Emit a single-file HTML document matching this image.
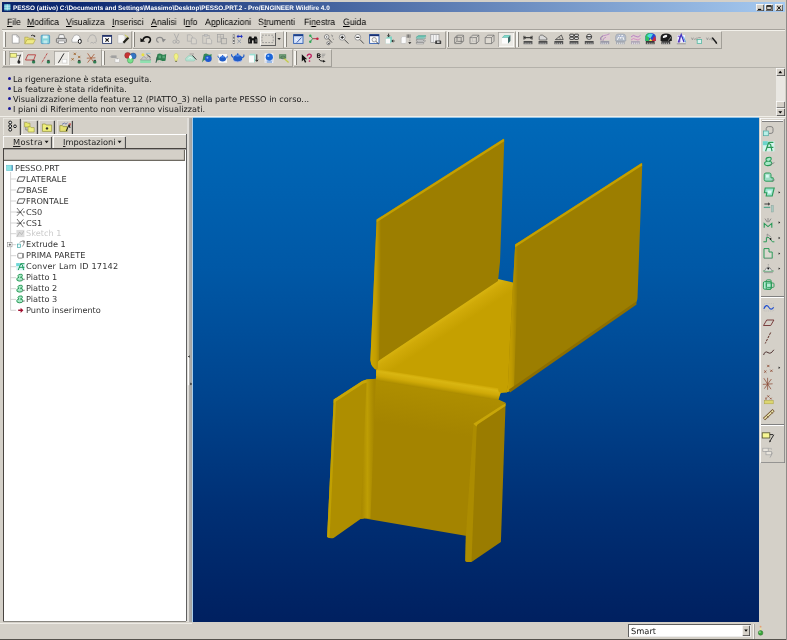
<!DOCTYPE html>
<html lang="it">
<head>
<meta charset="utf-8">
<title>PESSO (attivo) - Pro/ENGINEER Wildfire 4.0</title>
<style>
html,body{margin:0;padding:0;}
body{text-rendering:geometricPrecision;width:787px;height:640px;overflow:hidden;background:#d4d0c8;font-family:"DejaVu Sans","Liberation Sans",sans-serif;position:relative;color:#000;}
.abs{position:absolute;}
#title{left:2px;top:2px;width:783px;height:10px;background:linear-gradient(90deg,#0a246a 0%,#0e2a72 10%,#a6caf0 100%);}
#title .t{will-change:transform;position:absolute;left:10.5px;top:1.5px;height:10px;line-height:10px;font-family:"Liberation Sans",sans-serif;font-size:6.4px;font-weight:bold;color:#fff;white-space:nowrap;}
.wb{position:absolute;top:1.5px;height:7.5px;width:8px;background:#d4d0c8;box-shadow:inset .7px .7px 0 #fff,inset -.7px -.7px 0 #404040;}
#menu{left:2px;top:12px;width:783px;height:17px;background:#d4d0c8;font-family:"Liberation Sans",sans-serif;}
#menu span{will-change:transform;position:absolute;top:2.5px;height:14px;line-height:14px;font-size:9.2px;white-space:nowrap;color:#000;transform:scaleX(.94);transform-origin:0 50%;}
#menu u{text-decoration:underline;text-decoration-thickness:.7px;text-underline-offset:.6px;}
.tbg{position:absolute;box-sizing:border-box;border:1px solid;border-color:#f2f0ea #a29f98 #a29f98 transparent;border-left:none;}
.tbg:before{content:"";position:absolute;left:0;top:.6px;bottom:.8px;width:1.700px;background:#f6f5f1;border-right:.9px solid #86837c;}
.pressed{position:absolute;background:#eceae5;box-shadow:inset .8px .8px 0 #a4a19a,inset -.8px -.8px 0 #fbfbf8;}
#msg{left:2px;top:68px;width:783px;height:49px;background:#d4d0c8;}
#msg div.l{will-change:transform;position:absolute;left:10.8px;height:10px;line-height:10px;font-size:8.15px;white-space:nowrap;color:#181818;}
#msg b{position:absolute;left:6px;width:3.2px;height:3.2px;border-radius:50%;background:#1a1a9c;}
#left{left:0;top:117px;width:193px;height:523px;background:#d4d0c8;}
.tn{will-change:transform;position:absolute;left:26.2px;font-size:8.2px;line-height:11px;height:11px;white-space:nowrap;color:#363636;}
#view{left:193px;top:118px;width:566px;height:504px;background:linear-gradient(180deg,#0069b9 0%,#0058a6 30%,#00448e 55%,#002f74 78%,#002060 100%);overflow:hidden;}
#right{left:759px;top:117px;width:28px;height:505px;background:#d4d0c8;}
#status{left:0;top:622px;width:787px;height:18px;background:#d4d0c8;}
.btn{will-change:transform;position:absolute;font-size:8.25px;white-space:nowrap;color:#202020;}
</style>
</head>
<body>
<div id="title" class="abs"><svg class="abs" style="left:1.6px;top:1.8px" width="7" height="7" viewBox="0 0 7 7"><rect x=".2" y=".2" width="6.200" height="6.200" fill="#6cc8d8"/><path d="M.2,2.200h6.200M.2,4.300h6.200M3.300,.2v6.200" stroke="#d8f4fa" stroke-width=".6"/></svg><div class="t">PESSO (attivo) C:\Documents and Settings\Massimo\Desktop\PESSO.PRT.2 - Pro/ENGINEER Wildfire 4.0</div><div class="wb" style="left:754.300px"><svg width="8" height="7.500" class="abs" style="left:0;top:0"><path d="M2,5.400h3.200" stroke="#000" stroke-width="1.100"/></svg></div><div class="wb" style="left:763.200px"><svg width="8" height="7.500" class="abs" style="left:0;top:0"><rect x="1.800" y="1.800" width="4.400" height="3.800" fill="none" stroke="#000" stroke-width=".7"/><path d="M1.800,2.100h4.400" stroke="#000" stroke-width="1.100"/></svg></div><div class="wb" style="left:773.300px"><svg width="8" height="7.500" class="abs" style="left:0;top:0"><path d="M2.200,2l3.600,3.600M5.800,2l-3.600,3.600" stroke="#000" stroke-width="1"/></svg></div></div>
<div id="menu" class="abs"><span style="left:5px"><u>F</u>ile</span><span style="left:25px"><u>M</u>odifica</span><span style="left:64px"><u>V</u>isualizza</span><span style="left:110px"><u>I</u>nserisci</span><span style="left:149px"><u>A</u>nalisi</span><span style="left:181px">I<u>n</u>fo</span><span style="left:203px">A<u>p</u>plicazioni</span><span style="left:256px">S<u>t</u>rumenti</span><span style="left:302px">Fi<u>n</u>estra</span><span style="left:341px"><u>G</u>uida</span></div>
<div class="abs" style="left:2px;top:29px;width:783px;height:1px;background:#a6a39c"></div><div class="abs" style="left:2px;top:30px;width:783px;height:1px;background:#f2f0ea"></div>
<div class="tbg" style="left:3.4px;top:30.500px;width:128.79999999999998px;height:18px"></div><div class="tbg" style="left:132.6px;top:30.500px;width:151.6px;height:18px"></div><div class="tbg" style="left:284.4px;top:30.500px;width:162.0px;height:18px"></div><div class="tbg" style="left:446.6px;top:30.500px;width:69.60000000000002px;height:18px"></div><div class="tbg" style="left:516.4px;top:30.500px;width:205.60000000000002px;height:18px"></div><div class="tbg" style="left:3.4px;top:49px;width:98.6px;height:18px"></div><div class="tbg" style="left:102.2px;top:49px;width:190.5px;height:18px"></div><div class="tbg" style="left:294px;top:49px;width:37.5px;height:18px"></div><div class="pressed" style="left:8.500px;top:50.600px;width:14.200px;height:14.600px"></div><div class="pressed" style="left:54.300px;top:50.600px;width:14.600px;height:14.600px"></div><div class="pressed" style="left:497.600px;top:32px;width:16px;height:14.600px"></div><div class="abs" style="left:260px;top:32px;width:15.600px;height:14.300px;box-shadow:inset .8px .8px 0 #fff,inset -1px -1px 0 #606060;background:#dad6ce"></div>
<div class="abs" style="left:2px;top:67.300px;width:783px;height:.8px;background:#b4b1aa"></div><div class="abs" style="left:2px;top:68.100px;width:783px;height:.8px;background:#ecebe6"></div><div id="msg" class="abs"><b style="top:8.8px"></b><div class="l" style="top:5.8px">La rigenerazione è stata eseguita.</div><b style="top:18.8px"></b><div class="l" style="top:15.8px">La feature è stata ridefinita.</div><b style="top:28.9px"></b><div class="l" style="letter-spacing:.04px;top:25.9px">Visualizzazione della feature 12 (PIATTO_3) nella parte PESSO in corso...</div><b style="top:38.9px"></b><div class="l" style="top:35.9px">I piani di Riferimento non verranno visualizzati.</div><div class="abs" style="left:774px;top:0.200px;width:8.500px;height:48px;background:#e9e7e2"></div><div class="abs" style="left:774px;top:.2px;width:8.500px;height:8.200px;background:#d4d0c8;box-shadow:inset .7px .7px 0 #fff,inset -.8px -.8px 0 #404040"><svg class="abs" style="left:0;top:0" width="8.500" height="8.200"><path d="M2.300,5.200l1.950,-2.400l1.950,2.400z" fill="#000"/></svg></div><div class="abs" style="left:774px;top:33px;width:8.500px;height:6.600px;background:#d4d0c8;box-shadow:inset .7px .7px 0 #fff,inset -.8px -.8px 0 #606060"></div><div class="abs" style="left:774px;top:39.600px;width:8.500px;height:8.600px;background:#d4d0c8;box-shadow:inset .7px .7px 0 #fff,inset -.8px -.8px 0 #404040"><svg class="abs" style="left:0;top:0" width="8.500" height="8.600"><path d="M2.300,3.200l1.950,2.400l1.950,-2.400z" fill="#000"/></svg></div></div>
<div class="abs" style="left:0;top:116px;width:787px;height:1px;background:#f0eee8"></div><div class="abs" style="left:0;top:117px;width:787px;height:1px;background:#c4c1ba"></div><div class="abs" style="left:192px;top:117.200px;width:567px;height:1px;background:#8fc3ea"></div>
<div id="left" class="abs"><div class="abs" style="left:3px;top:1.400px;width:18.200px;height:16.600px;background:#d4d0c8;box-shadow:inset .8px .8px 0 #eceae4,inset -1.200px 0 0 #484848"></div><div class="abs" style="left:22.2px;top:3.300px;width:15.400000000000002px;height:13.700px;background:#d4d0c8;box-shadow:inset .8px .8px 0 #eceae4,inset -1.200px 0 0 #484848"></div><div class="abs" style="left:38.8px;top:3.300px;width:16.6px;height:13.700px;background:#d4d0c8;box-shadow:inset .8px .8px 0 #eceae4,inset -1.200px 0 0 #484848"></div><div class="abs" style="left:56.5px;top:3.300px;width:16.599999999999994px;height:13.700px;background:#d4d0c8;box-shadow:inset .8px .8px 0 #eceae4,inset -1.200px 0 0 #484848"></div><div class="abs" style="left:21px;top:17.200px;width:165.600px;height:1px;background:#fff"></div><div class="abs" style="left:186px;top:17.200px;width:1px;height:487px;background:#606060"></div><div class="abs" style="left:3.200px;top:18.500px;width:49.200px;height:13px;box-shadow:inset .8px .8px 0 #fff,inset -1.100px 0 0 #505050"></div><div class="abs" style="left:53.400px;top:18.500px;width:72.200px;height:13px;box-shadow:inset .8px .8px 0 #fff,inset -1.100px 0 0 #505050"></div><div class="btn" style="left:12.800px;top:20.400px;line-height:10px;letter-spacing:.3px"><u style="text-decoration-thickness:.6px;text-underline-offset:.9px">M</u>ostra</div><div class="btn" style="left:62.900px;top:20.400px;line-height:10px"><u style="text-decoration-thickness:.6px;text-underline-offset:.9px">I</u>mpostazioni</div><div class="abs" style="left:3.200px;top:31.300px;width:182.600px;height:473.500px;background:#fff;box-shadow:inset 1px 1.500px 0 #484440"></div><div class="abs" style="left:4.200px;top:32.800px;width:180.400px;height:11.200px;background:#d4d0c8;box-shadow:inset -1.100px -1.200px 0 #6e6a62"></div><div class="tn" style="top:45.8px;left:15.400px;">PESSO.PRT</div><div class="tn" style="top:56.8px;">LATERALE</div><div class="tn" style="top:67.8px;">BASE</div><div class="tn" style="top:78.8px;">FRONTALE</div><div class="tn" style="top:89.8px;">CS0</div><div class="tn" style="top:100.8px;">CS1</div><div class="tn" style="top:110.8px;color:#cbcbcb;">Sketch 1</div><div class="tn" style="top:121.8px;">Extrude 1</div><div class="tn" style="top:132.8px;">PRIMA PARETE</div><div class="tn" style="top:143.8px;letter-spacing:.16px;">Conver Lam ID 17142</div><div class="tn" style="top:154.8px;">Piatto 1</div><div class="tn" style="top:165.8px;">Piatto 2</div><div class="tn" style="top:176.8px;">Piatto 3</div><div class="tn" style="top:187.8px;">Punto inserimento</div></div>
<div class="abs" style="left:187px;top:118px;width:2.200px;height:504px;background:#e0deda"></div><div class="abs" style="left:189.200px;top:118px;width:2.800px;height:504px;background:linear-gradient(90deg,#b4b2ae,#a2a2a0)"></div><div class="abs" style="left:192px;top:118px;width:1.200px;height:504px;background:#a9cdea"></div>
<div id="view" class="abs"><svg width="566" height="504" viewBox="193 118 566 504" style="position:absolute;left:0;top:0">
<defs>
<linearGradient id="gband" gradientUnits="userSpaceOnUse" x1="437.800" y1="378.800" x2="435.900" y2="390.600"><stop offset="0" stop-color="#cfa906"/><stop offset="0.180" stop-color="#d9b612"/><stop offset="0.550" stop-color="#d0aa08"/><stop offset="0.800" stop-color="#bc9a02"/><stop offset="1" stop-color="#a88800"/></linearGradient>
<linearGradient id="glw" gradientUnits="userSpaceOnUse" x1="371" y1="300" x2="381" y2="300"><stop offset="0" stop-color="#cca600"/><stop offset="0.500" stop-color="#c29c00"/><stop offset="1" stop-color="#9c7e00"/></linearGradient>
<linearGradient id="grw" gradientUnits="userSpaceOnUse" x1="507" y1="320" x2="518" y2="320"><stop offset="0" stop-color="#c8a200"/><stop offset="0.450" stop-color="#bc9800"/><stop offset="1" stop-color="#9c7e00"/></linearGradient>
<linearGradient id="glf" gradientUnits="userSpaceOnUse" x1="362" y1="450" x2="374" y2="450"><stop offset="0" stop-color="#aa8a00"/><stop offset="0.450" stop-color="#be9e04"/><stop offset="1" stop-color="#a68600"/></linearGradient>
<linearGradient id="gfloor" gradientUnits="userSpaceOnUse" x1="437" y1="321" x2="446" y2="334.600"><stop offset="0" stop-color="#d8b410"/><stop offset="0.300" stop-color="#d0aa08"/><stop offset="1" stop-color="#c5a000"/></linearGradient>
<linearGradient id="gpanel" gradientUnits="userSpaceOnUse" x1="430" y1="390" x2="424" y2="430"><stop offset="0" stop-color="#ae8e00"/><stop offset="1" stop-color="#a48400"/></linearGradient>
</defs>
<!-- floor -->
<path d="M376,360 L498,279 L515,283 L516,383 L510,390.600 L506.200,392.500 L500.600,393.100 L499,396 L376,376 Z" fill="url(#gfloor)"/>
<!-- left wall -->
<path d="M376.700,219.400 L503.300,139 Q504.300,138.500 504.300,139.700 L500,262 L498,281 L377.500,361.500 L377.200,369.900 Q371,368 370.400,360 Z" fill="#9c7e00"/>
<path d="M376.700,219.400 L382,216 L379,361 L377.500,361.500 L377.200,369.900 Q371,368 370.400,360 Z" fill="url(#glw)"/>
<polygon points="376.700,219.400 503.600,138.800 504.200,141.300 376.700,222.200" fill="#c4a000"/>
<!-- right wall -->
<path d="M515.200,244.500 L641.300,163.200 Q642.300,162.600 642.300,163.800 L637.500,298 Q637,303 634,305 L510,391 L506.200,392.500 L508,385 L510,340 Z" fill="#9c7e00"/>
<path d="M515.200,244.500 L519,242 L514,388 L510,391 L506.200,392.500 L508,385 L510,340 Z" fill="url(#grw)"/>
<polygon points="515.200,244.500 641.600,163 642.200,165.400 515.200,247.300" fill="#c4a000"/>
<polygon points="636.200,301.500 636.600,304.600 510,392.400 509,389.600" fill="#8c6e00"/>
<!-- front panel -->
<polygon points="374.500,379.300 498.400,399.500 505.600,402.700 478,426 467,536 365,518.500" fill="url(#gpanel)"/>
<!-- front bend band -->
<path d="M377.200,369.300 L498.300,388.300 Q497.500,392 500.600,393.100 L498.400,400.300 L375.500,380.600 Z" fill="url(#gband)"/>
<!-- left flange -->
<path d="M333.750,399.500 L362.200,381 L366.600,379.600 L372,379 L366.500,518 L360.500,519 L333.600,538 Q330,539 327.100,537 Z" fill="#ae8e00"/>
<polygon points="366.600,379.600 375.900,378.750 370.500,518.600 366,517.900 360.500,519" fill="url(#glf)"/>
<polygon points="333.750,399.500 336.200,398 329.600,538 327.100,537" fill="#c0a002"/>
<polygon points="333.750,399.500 362.200,381 366.600,379.600 367,382.500 363,383.800 333.650,402.900" fill="#c8a606"/>
<!-- right flange -->
<path d="M476.800,424.500 L505.600,402.900 L500.900,542.100 L471.900,561.800 L467,562 Q465.300,562 465.300,560.700 L465.900,534.500 Z" fill="#9a7c00"/>
<polygon points="473.400,423.700 476.800,424.500 471.500,561.900 467,562 465.300,560.700 465.900,534.500" fill="#ac8c00"/>
<polygon points="473.400,423.700 505.600,402.900 505.500,406 477.600,424.500 476.500,426.500" fill="#c8a608"/>
</svg>
</div>
<div id="right" class="abs"><div class="abs" style="left:.8px;top:1px;width:25px;height:344.500px;box-shadow:inset .8px .8px 0 #fff,inset -.8px -.8px 0 #808080"></div><div class="abs" style="left:3px;top:3.600px;width:21px;height:1px;background:#808080;box-shadow:0 -1px 0 #fff"></div><div class="abs" style="left:2px;top:178.600px;width:23px;height:1px;background:#808080;box-shadow:0 1px 0 #fff"></div><div class="abs" style="left:2px;top:306.600px;width:23px;height:1px;background:#808080;box-shadow:0 1px 0 #fff"></div></div>
<div id="status" class="abs"><div class="abs" style="left:627.800px;top:2.200px;width:123.200px;height:13px;background:#fff;box-shadow:inset 1px 1px 0 #606060,inset -.8px -.8px 0 #e8e8e8"></div><div class="btn" style="left:630.600px;top:3.600px;line-height:11px;font-size:8.300px">Smart</div><div class="abs" style="left:742.200px;top:3.400px;width:8px;height:11px;background:#d4d0c8;box-shadow:inset .7px .7px 0 #fff,inset -.8px -.8px 0 #404040"><svg class="abs" style="left:0;top:0" width="8" height="11.200"><path d="M2.200,4.600l1.800,2.200l1.800,-2.200z" fill="#000"/></svg></div><svg class="abs" style="left:757px;top:3px" width="8" height="13" viewBox="0 0 8 13"><circle cx="3.600" cy="1.700" r=".9" fill="#e8a070"/><circle cx="3.600" cy="4" r="1" fill="#e8e0a0"/><circle cx="3.600" cy="7.900" r="2.300" fill="#3aa63a" stroke="#2a6a2a" stroke-width=".5"/><circle cx="2.900" cy="7.100" r=".9" fill="#90e090"/></svg><div class="abs" style="left:753.200px;top:1.500px;width:.8px;height:15px;background:#f4f2ee"></div><div class="abs" style="left:754px;top:1.500px;width:.8px;height:15px;background:#a8a6a0"></div><div class="abs" style="left:0;top:16.600px;width:787px;height:1.400px;background:#55524c"></div><div class="abs" style="left:786.200px;top:-622px;width:.8px;height:640px;background:#8e8c88"></div><div class="abs" style="left:3px;top:-1.200px;width:183px;height:1px;background:#8a8882"></div><div class="abs" style="left:0;top:.8px;width:192px;height:1px;background:#eeece6"></div></div>
<svg class="abs" style="left:0;top:0;pointer-events:none;filter:blur(.35px)" width="787" height="640" viewBox="0 0 787 640"><path d="M44.600,140.800h4l-2,2.500z M117.600,140.800h4l-2,2.500z" fill="#181818"/><path d="M12.3,34.8h4.6l2.2,2.2v6.2h-6.8z" fill="#fff" stroke="#909090" stroke-width=".7"/><path d="M16.9,34.8v2.2h2.2" fill="none" stroke="#909090" stroke-width=".6"/><path d="M24.8,43.8v-6.6h3.2l.8,1h4.6v1.4" fill="#e6de72" stroke="#a8a040" stroke-width=".6"/><path d="M24.8,43.8l2.2,-4.2h8.4l-2.2,4.2z" fill="#f0ea84" stroke="#a8a040" stroke-width=".6"/><path d="M31,35.8q2,-1.6 3.4,0.2" fill="none" stroke="#202020" stroke-width=".8"/><path d="M33.4,36.6l1.8,.4l-.2,-1.9z" fill="#202020"/><rect x="41.2" y="35.2" width="8.4" height="8.4" rx=".8" fill="#86d4da" stroke="#3f8fc0" stroke-width=".8"/><rect x="43" y="35.6" width="4.6" height="2.8" fill="#d8f4f6"/><rect x="43.4" y="40.4" width="4" height="3" fill="#bfe9ee"/><path d="M58.2,38.4l1.2,-3.8h4.2l1.4,3.8z" fill="#f4f4f4" stroke="#707070" stroke-width=".7"/><rect x="56.4" y="38.4" width="10" height="4.2" rx="1" fill="#c8c8c8" stroke="#606060" stroke-width=".8"/><rect x="58.4" y="41" width="6" height="2.6" fill="#f8f8f8" stroke="#707070" stroke-width=".5"/><path d="M72,42.2q-.8,-3 1,-4.6q.8,-3 3.8,-2.8q3,.2 3.4,3.2q1.2,1.6 .4,4.2z" fill="#fafafa" stroke="#9a9a9a" stroke-width=".7"/><ellipse cx="79.8" cy="41.4" rx="1.5" ry="2.1" fill="#fff" stroke="#181818" stroke-width="1"/><path d="M88,42q-.8,-3 1,-4.4q.8,-3 3.6,-2.8q2.8,.2 3.2,3q1,1.6 .4,4.2" fill="none" stroke="#a4a4a4" stroke-width=".7"/><path d="M90.4,43.2q1.6,-1.8 3,0q1.4,-1.8 2.8,0" fill="none" stroke="#a4a4a4" stroke-width=".7"/><rect x="102.6" y="35.4" width="9" height="8" fill="#fff" stroke="#26386c" stroke-width=".9"/><rect x="102.6" y="35.2" width="9" height="1.6" fill="#1c2c64"/><path d="M105.4,38.4l3.4,3.2m0,-3.2l-3.4,3.2" stroke="#101010" stroke-width="1.1"/><path d="M117.8,34.6h5.2l2,2v6.6h-7.2z" fill="#f6f6f6" stroke="#b0b0b0" stroke-width=".6"/><path d="M128.4,37.4l-5,5.4" stroke="#202018" stroke-width="2.2"/><path d="M124.8,34.8l3.4,2.6" stroke="#c8d040" stroke-width=".9"/><path d="M142.900,40.300Q143.800,36.700 147.300,36.900Q151,37.200 150.300,40.500Q149.900,42.300 148.300,42.700" fill="none" stroke="#101010" stroke-width="1.600"/><path d="M140.300,38l.2,4.100l4.700,-.5z" fill="#101010"/><path d="M163.2,41.2q.2,-3.8 -3.4,-3.8q-3.4,0 -3.2,2.8q.2,1.8 2,2.2" fill="none" stroke="#8c8c8c" stroke-width="1.2"/><path d="M166,39.2l-4.2,-.4l1.2,3.8z" fill="#8c8c8c"/><path d="M174.2,33.6l2.8,6.4m1.8,-6.4l-2.8,6.4" stroke="#a6a6a6" stroke-width=".8" fill="none"/><circle cx="174.4" cy="41.8" r="1.5" fill="none" stroke="#a6a6a6" stroke-width=".8"/><circle cx="177.8" cy="41.8" r="1.5" fill="none" stroke="#a6a6a6" stroke-width=".8"/><path d="M187.4,34.8h3.2l1.8,1.8v4.6h-5z" fill="none" stroke="#aaa" stroke-width=".7"/><path d="M191.4,38h3.2l1.8,1.8v4h-5z" fill="#d8d4cc" stroke="#aaa" stroke-width=".7"/><rect x="202.8" y="35.6" width="6.4" height="7.6" fill="none" stroke="#aaa" stroke-width=".7"/><rect x="204.6" y="34.6" width="2.8" height="1.6" fill="#c4c4c4" stroke="#aaa" stroke-width=".5"/><path d="M206.4,38.4h3.4l1.8,1.6v3.8h-5.2z" fill="#dcd8d0" stroke="#aaa" stroke-width=".7"/><rect x="217.4" y="34.6" width="6" height="7.4" fill="none" stroke="#a0a0a0" stroke-width=".7"/><path d="M220.4,34.6v7.4M217.4,37h6" stroke="#a0a0a0" stroke-width=".5"/><rect x="221.4" y="38.6" width="5" height="5.2" fill="#d0ccc4" stroke="#9c9c9c" stroke-width=".7"/><rect x="232.8" y="34.4" width="1.9" height="9.6" fill="#707070"/><circle cx="233.75" cy="36" r=".7" fill="#fff"/><circle cx="233.75" cy="39.2" r=".7" fill="#fff"/><circle cx="233.75" cy="42.4" r=".7" fill="#fff"/><path d="M236.6,36.4l1.8,-1.8v1.2h2.6v-1.2l1.8,1.8l-1.8,1.8v-1.2h-2.6v1.2z" fill="#2030c0"/><path d="M237.4,39.6l3.6,3.4m0,-3.4l-3.6,3.4" stroke="#9098a8" stroke-width=".9"/><path d="M248.2,43.4v-4.6l1,-2.4h2.2l.6,2.4v4.6z M253.6,43.4v-4.6l.6,-2.4h2.2l1,2.4v4.6z" fill="#141414"/><rect x="251.4" y="38.2" width="2.8" height="2.2" fill="#141414"/><path d="M249.6,39.2v3M256,39.2v3" stroke="#d0d0d0" stroke-width=".6"/><rect x="262" y="35.2" width="11.2" height="7.4" fill="none" stroke="#8a8a8a" stroke-width=".8" stroke-dasharray="1.8,1.3"/><path d="M277.4,38l3.4,0l-1.7,1.9z" fill="#202020"/><rect x="293.6" y="34.6" width="9.4" height="8.8" fill="#d6e4fb" stroke="#2f5fb4" stroke-width=".9"/><rect x="293.6" y="34.4" width="9.4" height="1.8" fill="#1f3f86"/><path d="M301.4,37.6l-4.6,5" stroke="#2c4ca0" stroke-width=".9"/><path d="M295.4,38.6l2.2,2.2" stroke="#fff" stroke-width=".8"/><path d="M310.4,35.8l2.2,2.9l-2.2,2.9" fill="none" stroke="#2f9a52" stroke-width=".9"/><path d="M312.6,38.7h4.6" stroke="#b02840" stroke-width=".9"/><circle cx="310.3" cy="35.7" r="1.2" fill="#30a858"/><circle cx="310.3" cy="41.8" r="1.2" fill="#30a858"/><circle cx="317.4" cy="38.7" r="1.25" fill="#c42040"/><circle cx="326.7" cy="36.9" r="2.3" fill="#f0f0f0" stroke="#606060" stroke-width=".7"/><circle cx="326.7" cy="36.9" r=".6" fill="#303030"/><path d="M328.4,38.6l3.6,4" stroke="#404040" stroke-width=".9"/><circle cx="328.4" cy="43.2" r="1.6" fill="#e8e8e8" stroke="#606060" stroke-width=".7"/><circle cx="328.8" cy="43.6" r=".7" fill="#202020"/><path d="M331,35l1.6,.6l-.4,1.6m.8,1.2l.6,1.6" stroke="#707070" stroke-width=".6" fill="none"/><circle cx="342.2" cy="37.3" r="2.9" fill="#fff" stroke="#808080" stroke-width=".8"/><path d="M340.6,37.3h3.2M342.2,35.7v3.2" stroke="#101010" stroke-width="1"/><path d="M344.4,39.6l4,4" stroke="#505050" stroke-width="1"/><circle cx="357.8" cy="37.3" r="2.9" fill="#fff" stroke="#808080" stroke-width=".8"/><path d="M356.2,37.3h3.2" stroke="#101010" stroke-width="1"/><path d="M360,39.6l3.8,4" stroke="#505050" stroke-width="1"/><rect x="369.6" y="34.6" width="9.4" height="8.8" fill="#fff" stroke="#2f5fb4" stroke-width=".9"/><rect x="369.6" y="34.4" width="9.4" height="1.8" fill="#1a2f70"/><circle cx="374.2" cy="39.7" r="2.2" fill="#f4f4f4" stroke="#8a8a8a" stroke-width=".8"/><path d="M375.9,41.4l2.8,2.6" stroke="#404040" stroke-width=".9"/><path d="M385.8,38.6l1.8,-2.2h4.4v5l-1.8,2.2h-4.4z" fill="#7fd2c2"/><rect x="385.8" y="38.6" width="4.4" height="5" fill="#fbfbfb"/><path d="M388.6,33.6v2.6m-1.2,-.8l1.2,1.4l1.2,-1.4" stroke="#101010" stroke-width=".8" fill="none"/><path d="M394.6,41h-2.2m.8,-1.2l-1.4,1.2l1.4,1.2" stroke="#101010" stroke-width=".8" fill="none"/><path d="M401.2,38l1.2,-1.4h3.8v5.6l-1.2,1.4h-3.8z" fill="#fafafa" stroke="#b0b0b0" stroke-width=".5"/><path d="M407.2,34.4v3.4m1.4,-3.4v3.4m1.4,-3.4v3.4" stroke="#585858" stroke-width=".8"/><path d="M408.2,42.2h3.2l-1.6,1.8z" fill="#181818"/><path d="M409.8,38.6v3" stroke="#707070" stroke-width=".6" stroke-dasharray=".8,.6"/><path d="M416.4,42.4l2,-1.6h7.2l-2,1.6z M416.4,43.8h7.2v-1.4h-7.2z" fill="#fff" stroke="#808080" stroke-width=".6"/><path d="M416.4,39.8l2,-1.6h7.2l-2,1.6z M416.4,41.2h7.2v-1.4h-7.2z" fill="#fff" stroke="#808080" stroke-width=".6"/><path d="M416.4,37.2l2,-1.6h7.2l-2,1.6z" fill="#6fd0c0" stroke="#50a090" stroke-width=".6"/><path d="M416.4,37.2h7.2l2,-1.6v1.4l-2,1.6h-7.2z" fill="#a8e4da" stroke="#50a090" stroke-width=".5"/><rect x="430.8" y="34.4" width="8.2" height="8.2" fill="#f4f4f4" stroke="#909090" stroke-width=".7"/><path d="M433.4,34.4v8.2M436.2,34.4v8.2" stroke="#a8a8a8" stroke-width=".6"/><rect x="435.2" y="40.4" width="6" height="3.6" rx=".6" fill="#404040"/><rect x="437" y="41.2" width="2.6" height="1.8" fill="#c8c8c8"/><rect x="454.6" y="37.400000000000006" width="6.6" height="6.2" rx=".8" fill="none" stroke="#686868" stroke-width=".7"/><rect x="457.0" y="35.2" width="6.6" height="6.2" rx=".8" fill="none" stroke="#686868" stroke-width=".7"/><path d="M454.6,37.800000000000004l2.4,-2.2M461.20000000000005,37.800000000000004l2.4,-2.2M461.20000000000005,43.400000000000006l2.4,-2.2M454.6,43.400000000000006l2.4,-2.2" stroke="#686868" stroke-width=".6"/><path d="M470,37.6l2.4,-2.4h6.4v6l-2.4,2.4h-6.4z" fill="#dcd8d0" stroke="#686868" stroke-width=".7"/><path d="M470,37.6h6.4v6M476.4,37.6l2.4,-2.4" fill="none" stroke="#686868" stroke-width=".7"/><path d="M472.4,35.6v5.6h6M472.4,41.2l-2.2,2.2" stroke="#b0b0b0" stroke-width=".5" fill="none"/><path d="M485.2,37.6l2.4,-2.4h6.4v6l-2.4,2.4h-6.4z" fill="#dedad2" stroke="#686868" stroke-width=".7" stroke-linejoin="round"/><path d="M485.2,37.6h6.4v6M491.59999999999997,37.6l2.4,-2.4" fill="none" stroke="#686868" stroke-width=".7"/><path d="M502,37.800000000000004l2.4,-2.6h6v5.8l-2.4,2.6z" fill="#3e6664"/><path d="M502,37.800000000000004l2.4,-2.6h6l-2.4,2.6z" fill="#7fdccc"/><rect x="502" y="37.800000000000004" width="6" height="5.8" fill="#fdfdfd"/><rect x="523.6" y="41" width="8.8" height="3.2" fill="#4c4c4c"/><path d="M525.1,42.6v1.6M527.0,42.6v1.6M528.9,42.6v1.6M530.8000000000001,42.6v1.6" stroke="#f4f4f4" stroke-width=".7"/><path d="M524,35.8v3.8M532,35.8v3.8M524.4,37.7h7.2" stroke="#101010" stroke-width=".9"/><path d="M525.8,36.6l-1.4,1.1l1.4,1.1M530.2,36.6l1.4,1.1l-1.4,1.1" fill="none" stroke="#101010" stroke-width=".6"/><rect x="538.6" y="41" width="8.8" height="3.2" fill="#4c4c4c"/><path d="M540.1,42.6v1.6M542.0,42.6v1.6M543.9,42.6v1.6M545.8000000000001,42.6v1.6" stroke="#f4f4f4" stroke-width=".7"/><path d="M539.2,40v-3.4q1.4,-2.4 3.4,-1.4l4.2,2.8v2z" fill="#d8d8d8" stroke="#505050" stroke-width=".7"/><rect x="554.4" y="41" width="8.8" height="3.2" fill="#4c4c4c"/><path d="M555.9,42.6v1.6M557.8,42.6v1.6M559.6999999999999,42.6v1.6M561.6,42.6v1.6" stroke="#f4f4f4" stroke-width=".7"/><path d="M555.4,39.6l6,-4.6l1.8,4.6z" fill="none" stroke="#404040" stroke-width=".8"/><path d="M559,36.6q1.4,1.2 1.2,3" stroke="#404040" stroke-width=".5" fill="none"/><rect x="569.6" y="41" width="8.8" height="3.2" fill="#4c4c4c"/><path d="M571.1,42.6v1.6M573.0,42.6v1.6M574.9,42.6v1.6M576.8000000000001,42.6v1.6" stroke="#f4f4f4" stroke-width=".7"/><rect x="569.8" y="34.2" width="3.9" height="2.2" rx=".5" fill="#f0f0f0" stroke="#181818" stroke-width=".8"/><rect x="574.5" y="34.2" width="3.9" height="2.2" rx=".5" fill="#f0f0f0" stroke="#181818" stroke-width=".8"/><rect x="569.8" y="37.2" width="3.9" height="2.2" rx=".5" fill="#f0f0f0" stroke="#181818" stroke-width=".8"/><rect x="574.5" y="37.2" width="3.9" height="2.2" rx=".5" fill="#f0f0f0" stroke="#181818" stroke-width=".8"/><rect x="584.8" y="41" width="8.8" height="3.2" fill="#4c4c4c"/><path d="M586.3,42.6v1.6M588.1999999999999,42.6v1.6M590.0999999999999,42.6v1.6M592.0,42.6v1.6" stroke="#f4f4f4" stroke-width=".7"/><circle cx="589.1" cy="36.8" r="2.6" fill="#f0f0f0" stroke="#303030" stroke-width=".8"/><path d="M586.6,36.8h5" stroke="#181818" stroke-width="1.1"/><rect x="600.4" y="41" width="8.8" height="3.2" fill="#9a9aa8"/><path d="M601.9,42.6v1.6M603.8,42.6v1.6M605.6999999999999,42.6v1.6M607.6,42.6v1.6" stroke="#f4f4f4" stroke-width=".7"/><path d="M601,40.4q-1.6,-3.2 2,-4.6q3.4,-.6 6.4,-1.8M603,40.6q0,-2.6 3,-3.4" fill="none" stroke="#8c62a6" stroke-width=".9"/><rect x="603" y="34" width="7" height="6" fill="#f0c8e0" opacity=".45"/><rect x="616" y="41" width="8.8" height="3.2" fill="#a8acb4"/><path d="M617.5,42.6v1.6M619.4,42.6v1.6M621.3,42.6v1.6M623.2,42.6v1.6" stroke="#f4f4f4" stroke-width=".7"/><path d="M615.6,41v-4.6q.4,-2.4 2.8,-2.4h4.6q2.4,0 2.8,2.4v4.6z" fill="#b4bcc8" stroke="#9098a4" stroke-width=".5"/><path d="M617.4,39.8l2,-4.4l1.2,3l1.6,-3.4l1.6,4.8" fill="none" stroke="#fff" stroke-width=".9"/><path d="M618,36.4h5.4" stroke="#7088c0" stroke-width=".5"/><rect x="631" y="41" width="8.8" height="3.2" fill="#b0a8b8"/><path d="M632.5,42.6v1.6M634.4,42.6v1.6M636.3,42.6v1.6M638.2,42.6v1.6" stroke="#f4f4f4" stroke-width=".7"/><path d="M631,37q2.4,-2.8 4.8,-.6q2.2,1.8 4.6,-1" fill="none" stroke="#9058b0" stroke-width=".9"/><path d="M631,40q2.4,-2.6 4.8,-.6q2.2,1.6 4.6,-.8" fill="none" stroke="#c070b0" stroke-width=".9"/><rect x="631" y="34.6" width="9.4" height="6" fill="#f4c0e0" opacity=".35"/><rect x="645.8" y="41" width="8.8" height="3.2" fill="#383838"/><path d="M647.3,42.6v1.6M649.1999999999999,42.6v1.6M651.0999999999999,42.6v1.6M653.0,42.6v1.6" stroke="#f4f4f4" stroke-width=".7"/><path d="M645.4,41v-4.400q.6,-3.400 4.800,-3.600q5.200,.2 5.600,3.600v4.400z" fill="#2848d0"/><path d="M645.4,41v-4.400q.6,-3.400 4.800,-3.600l-1.400,8z" fill="#30c060"/><path d="M650.4,33.4q-2.4,.8 -3.4,2.6l3.4,2.6l2.6,-4.4q-1.2,-.8 -2.6,-.8z" fill="#50d8e0"/><path d="M655.8,41q.2,-3.4 -1,-5l-3.2,5z" fill="#d02838"/><path d="M649,41l1.6,-2.6l1.6,2.6z" fill="#f0e040"/><rect x="661.4" y="41" width="8.8" height="3.2" fill="#404040"/><path d="M662.9,42.6v1.6M664.8,42.6v1.6M666.6999999999999,42.6v1.6M668.6,42.6v1.6" stroke="#f4f4f4" stroke-width=".7"/><path d="M660.6,41v-4q.6,-3.400 5.400,-3.400q5.400,.2 5.800,3.600v3.800z" fill="#1c1c1c"/><ellipse cx="665" cy="36.4" rx="2.4" ry="1.3" transform="rotate(-25 665 36.4)" fill="#f4f4f4"/><path d="M668,40.6q2.2,-1.4 2.8,-3.6" stroke="#b0b0b0" stroke-width=".7" fill="none"/><rect x="677.4" y="35" width="7.6" height="7.6" fill="#eef0ff"/><path d="M678.4,42l2.8,-7.4l2.8,7.4" fill="none" stroke="#4030c0" stroke-width="1.3"/><path d="M677.8,36.2h2v5.8h-2" fill="none" stroke="#6038b8" stroke-width=".9"/><path d="M683.4,36.6l2.2,5.6" stroke="#4aa0e0" stroke-width=".9"/><path d="M676.8,43.8h9" stroke="#8c8c8c" stroke-width=".8"/><path d="M691.4,37.6l1,2.2l1,-2.2m.8,2.2q1,-2.6 2,0m.8,-2.4v3.4m1.2,-3.2h2.6" fill="none" stroke="#8a8a8a" stroke-width=".7"/><rect x="697.2" y="39.6" width="4.4" height="4" fill="#d8f4ee" stroke="#58b8a4" stroke-width=".8"/><path d="M706.4,37.6l1,2.2l1,-2.2m.8,2.2q1,-2.6 2,0m.8,-2.4v3.4" fill="none" stroke="#8a8a8a" stroke-width=".7"/><path d="M712.2,37.6l4.4,5.4" stroke="#181818" stroke-width="1.5"/><path d="M716.2,42.4l1.4,1.8l-2,-.8z" fill="#181818"/><rect x="10.2" y="53.4" width="6.4" height="3.8" fill="#f4f48c" stroke="#909048" stroke-width=".6"/><path d="M20.6,54.6l-2.2,6.6" stroke="#181818" stroke-width=".9"/><path d="M16.6,55.4h3.4" stroke="#505050" stroke-width=".6"/><ellipse cx="18.9" cy="62" rx="1.5" ry="1.7" fill="#282828"/><path d="M27.8,54.8h7.8l-1.9,5.2h-8.2z" fill="none" stroke="#b83c3c" stroke-width=".9"/><ellipse cx="33.6" cy="62" rx="1.7" ry="1.5" fill="#2c7c50"/><path d="M32.4,60.4l2.4,0" stroke="#303030" stroke-width=".9"/><path d="M47.2,53.4l-5.8,9.8" stroke="#b83c3c" stroke-width=".9" stroke-dasharray="2.6,1"/><ellipse cx="48.4" cy="62" rx="1.7" ry="1.5" fill="#2c7c50"/><path d="M47.199999999999996,60.4l2.4,0" stroke="#303030" stroke-width=".9"/><path d="M64,53.4l-5.6,9.4" stroke="#181818" stroke-width=".9"/><rect x="62.2" y="59.2" width="4.6" height="3.8" fill="#fff" stroke="#c8c8c8" stroke-width=".5"/><path d="M73.7,52.8l2.2,2.2m0,-2.2l-2.2,2.2" stroke="#9c5c20" stroke-width="0.8"/><path d="M71.5,58.199999999999996l2.2,2.2m0,-2.2l-2.2,2.2" stroke="#9c5c20" stroke-width="0.8"/><path d="M78.10000000000001,55.9l2.2,2.2m0,-2.2l-2.2,2.2" stroke="#9c5c20" stroke-width="0.8"/><ellipse cx="79.2" cy="62" rx="1.7" ry="1.5" fill="#2c7c50"/><path d="M78.0,60.4l2.4,0" stroke="#303030" stroke-width=".9"/><path d="M87.6,53.4l6.6,9.4M94.4,54l-6.8,8.6M86.8,58.2l8.6,-.4" stroke="#a85c38" stroke-width=".8"/><ellipse cx="94.8" cy="62" rx="1.7" ry="1.5" fill="#2c7c50"/><path d="M93.6,60.4l2.4,0" stroke="#303030" stroke-width=".9"/><rect x="111.2" y="55.4" width="5.4" height="2.6" fill="#a0a0a0"/><path d="M109.8,56.8h1.6" stroke="#909090" stroke-width=".6"/><rect x="115" y="58.8" width="4.4" height="3.4" fill="#f6f6f6" stroke="#b8b8b8" stroke-width=".5"/><path d="M117.2,58v1.4" stroke="#909090" stroke-width=".6"/><circle cx="127.700" cy="55.400" r="3" fill="#c83434" stroke="#702020" stroke-width=".4"/><circle cx="133.200" cy="56" r="3" fill="#3476c4" stroke="#203c70" stroke-width=".4"/><circle cx="130.300" cy="60.300" r="2.900" fill="#78e08c" stroke="#2c7c3c" stroke-width=".4"/><path d="M128.800,57.200l1.600,-2.400l1.800,2.600l-1.800,2z" fill="#fff"/><path d="M129.600,55.600v2.600M131,55.400v3" stroke="#fff" stroke-width=".7"/><rect x="140.2" y="60" width="10.6" height="3" fill="#8fe0b0"/><path d="M140.4,60l3.4,-3.6l2.6,2l2.2,-2.6l2.2,4.2z" fill="#c8c8c8" stroke="#808080" stroke-width=".5"/><circle cx="142.9" cy="54.8" r="1.5" fill="#e8e040"/><path d="M146.6,54.4l4,3" stroke="#404040" stroke-width=".8"/><path d="M146,53.4h4.6" stroke="#70c0e0" stroke-width=".6"/><path d="M155.8,62.6l1.6,-8.4q2.4,-1.4 4.4,0q2,1.2 4.4,-.2l-.6,6.4q-2.4,1.2 -4.4,0q-2,-1 -4,.2z" fill="#2f8050"/><path d="M158.6,55.6h2.4v2.6h-2.4zM162.4,55.8h2.4v2.4h-2.4z" fill="#58a878"/><path d="M156,62.8l1.2,-6" stroke="#305848" stroke-width=".9"/><path d="M158,61.6l.6,1.2m1.6,-1.2l.6,1.2m1.6,-1.2l.6,1.2" stroke="#a0c0b0" stroke-width=".6"/><path d="M174,56.4q0,-3 2.1,-3t2.1,3q0,1.600 -1,3v1.600h-2.2v-1.600q-1,-1.400 -1,-3z" fill="#f2f286" stroke="#c8c860" stroke-width=".5"/><rect x="175.200" y="60.800" width="1.800" height="1.200" fill="#808060"/><path d="M186,61q-1.600,-2.400 1,-4q1.400,-2.200 4.200,-1.200q3,-.2 3.400,2.400q1.600,1.800 -.6,2.800z" fill="#b4e2d2" stroke="#88c0ac" stroke-width=".5"/><path d="M192.4,55.400l4,4.200" stroke="#303030" stroke-width=".9"/><path d="M189.600,54h4.400" stroke="#808080" stroke-width=".6"/><path d="M188.4,58.400q2,-2 4,0" fill="none" stroke="#f8f8f8" stroke-width=".7"/><path d="M202,62.600l1.800,-8.400q2.400,-1.200 4,0q1.800,1 3.800,-.2l-.4,6.200q-2,1 -3.800,0q-1.800,-1 -3.800,.4z" fill="#348858"/><circle cx="208.300" cy="58.800" r="3.300" fill="#1f58d0"/><circle cx="207.400" cy="57.700" r="1" fill="#80b0f8"/><rect x="218.400" y="54" width="8.600" height="8.800" fill="#f8f8f8"/><ellipse cx="222.6" cy="58.97" rx="3.42" ry="2.4699999999999998" fill="#1f5cc8"/><path d="M219.37,58.21q-1.9,-1.3299999999999998 -1.3299999999999998,-2.4699999999999998M225.64,58.4q2.28,-0.57 1.52,-2.4699999999999998" fill="none" stroke="#1f5cc8" stroke-width="0.855"/><ellipse cx="222.6" cy="56.69" rx="2.09" ry="0.855" fill="#4c88e8"/><circle cx="222.6" cy="55.644999999999996" r="0.6649999999999999" fill="#1f5cc8"/><ellipse cx="237.7" cy="58.55" rx="4.5" ry="3.25" fill="#1f5cc8"/><path d="M233.45,57.55q-2.5,-1.75 -1.75,-3.25M241.7,57.8q3.0,-0.75 2.0,-3.25" fill="none" stroke="#1f5cc8" stroke-width="1.125"/><ellipse cx="237.7" cy="55.55" rx="2.75" ry="1.125" fill="#4c88e8"/><circle cx="237.7" cy="54.175" r="0.875" fill="#1f5cc8"/><path d="M233.400,60.800q4.400,2.600 8.800,-.2" stroke="#a8b8f0" stroke-width=".8" fill="none"/><path d="M249,55.400l1.400,-1.600h5v7.200l-1.400,1.600h-5z" fill="#9ce0d4"/><rect x="249" y="55.400" width="5" height="7.200" fill="#fbfbfb"/><path d="M256.800,54.400v6.600m-1.300,-1.200l1.300,1.600l1.300,-1.600" stroke="#181818" stroke-width=".9" fill="none"/><rect x="264.600" y="53.400" width="8.800" height="9.600" fill="#f2f4fb"/><circle cx="269.300" cy="57.200" r="3.600" fill="#1c66d8"/><circle cx="268.300" cy="56" r="1.100" fill="#8cc0ff"/><rect x="266.600" y="61.400" width="5.400" height="1.200" fill="#5c90d8"/><path d="M265.200,62.800l1.600,-3.600M273.400,62.800l-1.600,-3.600" stroke="#c0c8e0" stroke-width=".6"/><rect x="279.100" y="54.200" width="7.100" height="4.500" fill="#5c8c64"/><path d="M280,55.400h5.200M280,56.800h5.200" stroke="#88b090" stroke-width=".6"/><path d="M283.600,58l5,4.600" stroke="#c4cc48" stroke-width="1.300"/><ellipse cx="283" cy="57.400" rx="2" ry="1.400" fill="none" stroke="#486850" stroke-width=".7"/><path d="M301.800,54.200v7.200l1.700,-1.600l1.500,2.900l1.300,-.7l-1.500,-2.800h2.400z" fill="#101010"/><path d="M307.300,56.200q.1,-2.100 2.100,-2q2,.1 1.900,1.900q-.1,1.100 -1.800,1.900v1.100" fill="none" stroke="#c02060" stroke-width="1.350"/><circle cx="309.500" cy="61" r=".85" fill="#c02060"/><path d="M317.400,53.800v3.800M317.400,53.800h1.500q1.200,0 1.200,.95t-1.200,.95h-1.500m1.500,0q1.400,0 1.400,.95t-1.400,.95h-1.500" fill="none" stroke="#101010" stroke-width="1"/><path d="M321.800,54.200h3.600M321.800,55.600h3M321.800,57h2" stroke="#909090" stroke-width=".7"/><path d="M319,59q.8,2.400 4.400,2.200" fill="none" stroke="#101010" stroke-width=".9"/><path d="M323,60l2.600,1.200l-2.400,1.300z" fill="#101010"/><circle cx="10.200" cy="122.500" r="1.450" fill="#f0f0f0" stroke="#141414" stroke-width="1"/><circle cx="10.200" cy="126.100" r="1.450" fill="#f0f0f0" stroke="#141414" stroke-width="1"/><circle cx="10.200" cy="129.700" r="1.450" fill="#f0f0f0" stroke="#141414" stroke-width="1"/><circle cx="15" cy="126.300" r="1.350" fill="#f0f0f0" stroke="#141414" stroke-width=".95"/><path d="M24.600,127v-4.600h2.400l.6,.8h2.400v3.800z" fill="#e8e870" stroke="#98983c" stroke-width=".6"/><path d="M28,132v-5.200h2.600l.6,.8h3v4.400z" fill="#f0f080" stroke="#98983c" stroke-width=".6"/><path d="M25.800,127.200v2.800h2" fill="none" stroke="#606060" stroke-width=".6"/><path d="M42.400,131.400v-7.400h3l.8,1h5.400v6.400z" fill="#eeee7c" stroke="#909038" stroke-width=".7"/><circle cx="47" cy="128.400" r="1.200" fill="#303030"/><path d="M59.800,131.400v-5.800h2.600l.8,1h4v4.800z" fill="#e6e070" stroke="#8c8c38" stroke-width=".7"/><path d="M62,124.400q2.600,-2.600 4.200,-.2l1.200,-1.600" fill="none" stroke="#5060a0" stroke-width=".7"/><path d="M66.200,131l3,-6.400l.8,3.400" fill="none" stroke="#181818" stroke-width="1"/><path d="M68.600,124.200l1.800,-.6l-.2,2" stroke="#c03030" stroke-width=".8" fill="none"/><rect x="6.600" y="165.200" width="5.600" height="5.400" fill="#8ae4e4" stroke="#58b8c8" stroke-width=".5"/><path d="M12.200,165.200v5.600" stroke="#3870a8" stroke-width=".9"/><path d="M10.600,172v138.300" stroke="#c8c8c8" stroke-width=".8"/><path d="M10.600,179h5.600" stroke="#c8c8c8" stroke-width=".8"/><path d="M10.600,190h5.600" stroke="#c8c8c8" stroke-width=".8"/><path d="M10.600,201h5.600" stroke="#c8c8c8" stroke-width=".8"/><path d="M10.600,212h5.600" stroke="#c8c8c8" stroke-width=".8"/><path d="M10.600,223h5.600" stroke="#c8c8c8" stroke-width=".8"/><path d="M10.600,233.7h5.600" stroke="#c8c8c8" stroke-width=".8"/><path d="M10.600,244.7h5.600" stroke="#c8c8c8" stroke-width=".8"/><path d="M10.600,255.7h5.600" stroke="#c8c8c8" stroke-width=".8"/><path d="M10.600,266.7h5.600" stroke="#c8c8c8" stroke-width=".8"/><path d="M10.600,277.7h5.600" stroke="#c8c8c8" stroke-width=".8"/><path d="M10.600,288.7h5.600" stroke="#c8c8c8" stroke-width=".8"/><path d="M10.600,299.4h5.600" stroke="#c8c8c8" stroke-width=".8"/><path d="M10.600,310.3h5.600" stroke="#c8c8c8" stroke-width=".8"/><path d="M18.900,176.8h6.200l-1.900,4.500h-6.200z" fill="#fff" stroke="#383838" stroke-width=".8"/><path d="M18.900,187.8h6.200l-1.900,4.500h-6.200z" fill="#fff" stroke="#383838" stroke-width=".8"/><path d="M18.900,198.8h6.200l-1.900,4.500h-6.200z" fill="#fff" stroke="#383838" stroke-width=".8"/><path d="M17,208l6.400,8.200M23.400,208.4l-6.400,7.400M16.600,212.2h5" stroke="#303030" stroke-width=".7" fill="none"/><path d="M23.200,212h1.600" stroke="#303030" stroke-width="1"/><path d="M17,219l6.400,8.200M23.400,219.4l-6.400,7.400M16.600,223.2h5" stroke="#303030" stroke-width=".7" fill="none"/><path d="M23.200,223h1.600" stroke="#303030" stroke-width="1"/><rect x="16.400" y="229.89999999999998" width="8" height="7.200" fill="#dcdcdc"/><path d="M17,236.7l2.600,-4.600l2,2.600l2.200,-3.600" stroke="#b4b4b4" stroke-width=".8" fill="none"/><rect x="7.700" y="242.5" width="4.300" height="4.300" fill="#fff" stroke="#909090" stroke-width=".6"/><path d="M8.700,244.7h2.300M9.850,243.54999999999998v2.300" stroke="#202020" stroke-width=".6"/><rect x="17.400" y="244.1" width="3.200" height="3.400" fill="#e8fcfc" stroke="#48a8a8" stroke-width=".7"/><path d="M19.600,242.29999999999998q3,-2.200 4.400,-.4q.6,1.800 -1.600,4.600" fill="none" stroke="#707070" stroke-width=".7"/><path d="M22.600,240.7l2,.4l-.6,1.800" fill="none" stroke="#505050" stroke-width=".6"/><rect x="17.800" y="253.29999999999998" width="5" height="4.800" rx="1" fill="#fff" stroke="#707070" stroke-width=".8"/><path d="M23.200,253.1v5" stroke="#404040" stroke-width=".7"/><rect x="16.200" y="263.09999999999997" width="8.800" height="7.200" fill="#d8f6f6"/><rect x="16.200" y="263.09999999999997" width="3.600" height="3" fill="#70d8d8"/><path d="M18.200,270.09999999999997l2.600,-6.400l1.600,1.200l1.200,5.200M19,267.3h5.400M20.600,263.7h3.800" fill="none" stroke="#1f9a5c" stroke-width="1"/><path d="M20.200,274.3q2.400,-.6 2.200,1.400q-.2,1.400 -2,1.600q2.800,.2 2.600,2q-.4,2 -3.800,1.800q-2.800,-.2 -2.400,-2.200q.4,-1.400 2.200,-1.600q-1.400,-.6 -1,-1.800q.4,-1.200 2.200,-1.200z" fill="#a8e8c8" stroke="#2a9a58" stroke-width="1"/><path d="M22,280.09999999999997l3,-1" stroke="#707070" stroke-width=".7"/><path d="M20.200,285.3q2.400,-.6 2.200,1.400q-.2,1.400 -2,1.600q2.800,.2 2.600,2q-.4,2 -3.800,1.800q-2.800,-.2 -2.400,-2.200q.4,-1.400 2.200,-1.600q-1.400,-.6 -1,-1.800q.4,-1.200 2.200,-1.200z" fill="#a8e8c8" stroke="#2a9a58" stroke-width="1"/><path d="M22,291.09999999999997l3,-1" stroke="#707070" stroke-width=".7"/><path d="M20.200,296.0q2.400,-.6 2.200,1.400q-.2,1.400 -2,1.600q2.800,.2 2.600,2q-.4,2 -3.800,1.800q-2.800,-.2 -2.400,-2.200q.4,-1.400 2.200,-1.600q-1.400,-.6 -1,-1.800q.4,-1.200 2.200,-1.200z" fill="#a8e8c8" stroke="#2a9a58" stroke-width="1"/><path d="M22,301.79999999999995l3,-1" stroke="#707070" stroke-width=".7"/><path d="M18.200,309.5h2.400v-1.800l2.800,2.600l-2.800,2.600v-1.800h-2.400z" fill="#a01030"/><path d="M188.500,355.200v30" stroke="#fff" stroke-width="1.200"/><path d="M189.600,355.200l-1.700,1.300l1.700,1.300z" fill="#181818"/><path d="M190.400,382.600l1.700,1.300l-1.700,1.300z" fill="#181818"/><path d="M766.200,130.600v-2q.2,-2 2.200,-2h2.600q2,0 2,2v2.800q0,2 -2,2h-2" fill="none" stroke="#707070" stroke-width=".8"/><rect x="763.600" y="131" width="4.700" height="4.700" fill="#b8f0e8" stroke="#48a8a0" stroke-width=".7"/><rect x="762.800" y="141.200" width="11.600" height="10.200" fill="#d4f4ee"/><rect x="762.800" y="141.200" width="5" height="4" fill="#6cd4cc"/><path d="M765.600,151.200l2.800,-8l2.200,1.400l1.400,6.600M766.600,147.400h6.800M768.400,142.400h5" fill="none" stroke="#2a9a58" stroke-width="1.200"/><path d="M768.600,157.400q2.800,-.6 2.600,1.800q-.2,1.600 -2.400,2q3.200,.2 3,2.200q-.4,2.400 -4.400,2.200q-3.200,-.2 -2.800,-2.600q.4,-1.600 2.600,-1.800q-1.600,-.8 -1.200,-2.200q.4,-1.400 2.600,-1.600z" fill="#a8e8c8" stroke="#2a9a58" stroke-width="1.100"/><path d="M770,164.800l4.400,-2.200" stroke="#808080" stroke-width=".8"/><path d="M766,173h3.400q1.600,0 1.600,1.600v3.200h2.200v3.400h-7.200q-1.800,0 -1.800,-1.800v-4.600q0,-1.800 1.800,-1.800z" fill="#9cdcc4" stroke="#2a9a58" stroke-width="1"/><path d="M771.400,181l3.400,-1.200" stroke="#808080" stroke-width=".8"/><rect x="766" y="174.600" width="2.800" height="3" fill="#d8f8f0"/><path d="M765.200,188h9l-2,8h-6l.6,-3.200h-2.400z" fill="#9ce4d0" stroke="#2a9a58" stroke-width="1.100"/><path d="M767.400,190.400h4.400l-.8,3.200h-3z" fill="#e0faf4"/><path d="M778.600,191.200l1.600,1.200l-1.600,1.200z" fill="#181818"/><path d="M764.400,204h5m-1.400,-1.200l1.600,1.200l-1.600,1.200" stroke="#181818" stroke-width=".8" fill="none"/><path d="M763.800,207.400h6.400" stroke="#58a890" stroke-width="1.300"/><rect x="771.400" y="205.400" width="2" height="6.600" fill="#a8c8c0" stroke="#80a098" stroke-width=".4"/><path d="M764.200,227.800v-4.400l3.800,3.200l3.800,-3.200v4.400" fill="none" stroke="#2a9a58" stroke-width="1.100"/><path d="M768,218v4.400M765,218.600l2.200,3.400M771,218.600l-2.200,3.400" stroke="#707070" stroke-width=".7"/><path d="M778.600,221.300l1.600,1.200l-1.600,1.200z" fill="#181818"/><path d="M763.400,241.800h3v-4.200h2.600l3.400,4.200h2" fill="none" stroke="#2a9a58" stroke-width="1"/><path d="M767.200,237.600v-3.600l4.200,3.400" fill="none" stroke="#808080" stroke-width=".7"/><circle cx="770.600" cy="239" r=".9" fill="#202020"/><path d="M778.600,236.800l1.600,1.200l-1.600,1.200z" fill="#181818"/><path d="M764,248.600h5v3.400h3.200v6.200h-8.200z" fill="#dcd8d0" stroke="#2a9a58" stroke-width="1"/><path d="M764,258.400h8.600" stroke="#a0a0a0" stroke-width=".6"/><path d="M778.600,252.400l1.600,1.200l-1.600,1.200z" fill="#181818"/><path d="M763.200,271h10.400" stroke="#2a9a58" stroke-width=".9"/><path d="M764.600,270.800q3.600,-7.600 7.400,0" fill="#e8e8e8" stroke="#808080" stroke-width=".8"/><circle cx="768.300" cy="268.400" r="1" fill="#181818"/><path d="M768.300,264v1.600M764,272.600h8.800" stroke="#808080" stroke-width=".6"/><path d="M778.600,267.400l1.600,1.200l-1.600,1.200z" fill="#181818"/><rect x="763.400" y="281.600" width="8" height="7.600" rx="1.400" fill="#b4ecd4" stroke="#2a9a58" stroke-width="1"/><rect x="766.200" y="279.800" width="5" height="9.600" rx="1.200" fill="none" stroke="#2a9a58" stroke-width=".9"/><rect x="766.400" y="283" width="7.600" height="4.400" rx="1" fill="none" stroke="#2a9a58" stroke-width=".9"/><rect x="764" y="303.600" width="9.600" height="7.400" fill="none" stroke="#b0b0b0" stroke-width=".6" stroke-dasharray=".8,1"/><path d="M763.800,308.800q2.600,-5.600 5,-1.600q2.400,3.800 4.800,0" fill="none" stroke="#1f4fd0" stroke-width="1.200"/><path d="M766.700,320h7.200l-3.200,5.500h-7.200z" fill="none" stroke="#703030" stroke-width=".9"/><path d="M770.700,332.500l-5.500,11" stroke="#603028" stroke-width="1" stroke-dasharray="2.600,1"/><path d="M763.600,355q1.400,-4.600 4.400,-2.400q2.800,2 5.800,-2.800" fill="none" stroke="#402020" stroke-width=".9"/><path d="M767.1999999999999,364.9l2.2,2.2m0,-2.2l-2.2,2.2" stroke="#8c4830" stroke-width="0.8"/><path d="M764.1999999999999,370.5l2.2,2.2m0,-2.2l-2.2,2.2" stroke="#8c4830" stroke-width="0.8"/><path d="M770.3,369.7l2.2,2.2m0,-2.2l-2.2,2.2" stroke="#8c4830" stroke-width="0.8"/><path d="M778.600,366.600l1.600,1.200l-1.600,1.200z" fill="#181818"/><path d="M763.800,378.200l7.200,11M771.400,379l-7,9.600M762.800,384.400l9.800,-.6M767.600,377.800v12" stroke="#8c4c38" stroke-width=".75"/><rect x="764.400" y="400.400" width="8.800" height="3.400" fill="#dcd670" stroke="#a8a040" stroke-width=".5"/><path d="M767.3,395.4l2,2m0,-2l-2,2" stroke="#8c4830" stroke-width="0.8"/><path d="M765.2,397.8l1.6,1.6m0,-1.6l-1.6,1.6" stroke="#8c4830" stroke-width="0.8"/><path d="M770.0,397.8l1.6,1.6m0,-1.6l-1.6,1.6" stroke="#8c4830" stroke-width="0.8"/><path d="M773.600,410.200l-9.600,9" stroke="#6c4c28" stroke-width="3"/><path d="M773.200,410.600l-8.800,8.200" stroke="#ece8b0" stroke-width="1.500"/><path d="M770.800,411.600l1.800,1.900M766.600,415.600l1.800,1.900" stroke="#6c4c28" stroke-width=".7"/><rect x="762.200" y="432.800" width="7.600" height="5.200" fill="#f6f694" stroke="#505028" stroke-width=".8"/><path d="M769.800,434.600h3.400M773.800,434.800l-4,6.600" stroke="#181818" stroke-width=".9"/><path d="M769.200,442.400l.4,-2.200l1.500,1z" fill="#181818"/><rect x="762.800" y="448.200" width="5.400" height="3.200" fill="#e8e4dc" stroke="#a0a0a0" stroke-width=".7"/><rect x="766" y="451.600" width="5.400" height="3.200" fill="#e8e4dc" stroke="#a0a0a0" stroke-width=".7"/><path d="M772.600,452.600l-2.600,5" stroke="#a0a0a0" stroke-width=".8"/><path d="M768,448.400h3.400v1.400" fill="none" stroke="#a8a8a8" stroke-width=".6"/></svg>
</body>
</html>
